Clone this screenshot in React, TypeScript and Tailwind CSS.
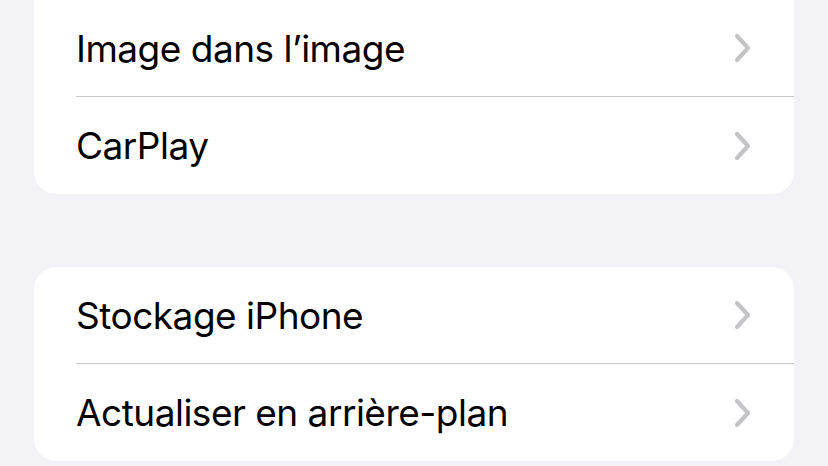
const Chevron = () => (
    <svg width="18" height="30" viewBox="0 0 18 30" fill="none" className="shrink-0">
        <path
            d="M3 3 L14 15 L3 27"
            stroke="#c4c4c7"
            strokeWidth="4.2"
            strokeLinecap="round"
            strokeLinejoin="round"
        />
    </svg>
);

const Row = ({ label, last }: { label: string; last?: boolean }) => (
    <div className="flex h-[97px] items-stretch pl-[42px]">
        <div
            className={
                "flex flex-1 items-center justify-between pr-[42px] " +
                (last ? "" : "border-b border-[#c8c8cc]")
            }
        >
            <span className="text-[37px] leading-none tracking-[-0.5px] text-black">{label}</span>
            <Chevron />
        </div>
    </div>
);

export default function App() {
    return (
        <div
            className="h-[466px] w-[828px] overflow-hidden bg-[#f2f2f7]"
            style={{ fontFamily: "Inter, 'Noto Sans', sans-serif" }}
        >
            <div className="mx-[34px] rounded-b-[22px] bg-white">
                <Row label="Image dans l’image" />
                <Row label="CarPlay" last />
            </div>

            <div className="mx-[34px] mt-[73px] rounded-[22px] bg-white">
                <Row label="Stockage iPhone" />
                <Row label="Actualiser en arrière-plan" last />
            </div>
        </div>
    );
}
